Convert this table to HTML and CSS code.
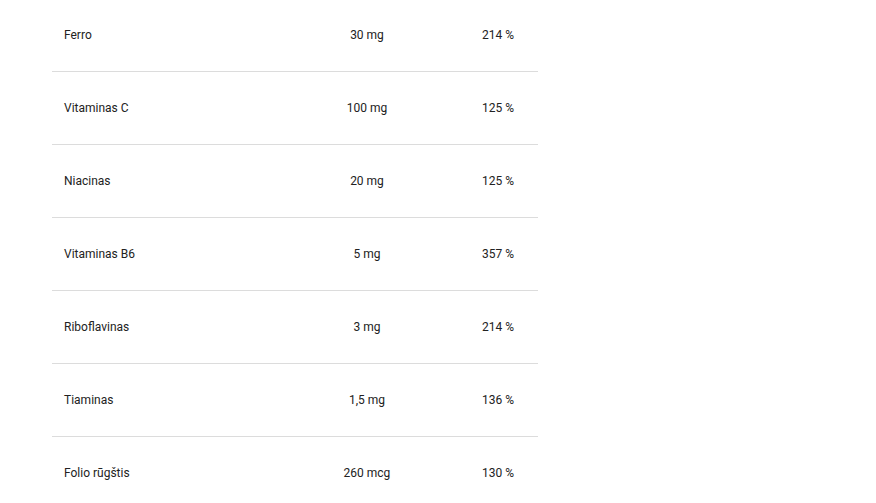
FILE: index.html
```html
<!DOCTYPE html>
<html lang="lt">
<head>
<meta charset="utf-8">
<link rel="stylesheet" href="styles.css">
</head>
<body>
<div class="table">
  <div class="row"><div class="name">Ferro</div><div class="amount">30 mg</div><div class="pct">214 %</div></div>
  <div class="row"><div class="name">Vitaminas C</div><div class="amount">100 mg</div><div class="pct">125 %</div></div>
  <div class="row"><div class="name">Niacinas</div><div class="amount">20 mg</div><div class="pct">125 %</div></div>
  <div class="row"><div class="name">Vitaminas B6</div><div class="amount">5 mg</div><div class="pct">357 %</div></div>
  <div class="row"><div class="name">Riboflavinas</div><div class="amount">3 mg</div><div class="pct">214 %</div></div>
  <div class="row"><div class="name">Tiaminas</div><div class="amount">1,5 mg</div><div class="pct">136 %</div></div>
  <div class="row"><div class="name">Folio rūgštis</div><div class="amount">260 mcg</div><div class="pct">130 %</div></div>
</div>
</body>
</html>
```
FILE: styles.css
```css
html, body {
  margin: 0;
  padding: 0;
  background: #fff;
  overflow: hidden;
}
body {
  font-family: Roboto, "Liberation Sans", sans-serif;
  font-size: 12px;
  color: #222;
}
.table {
  width: 486px;
  margin: -1px 0 0 52px;
}
.row {
  display: grid;
  grid-template-columns: 224px 182px 80px;
  align-items: center;
  height: 72px;
  border-bottom: 1px solid #dcdcdc;
}
.name {
  padding-left: 12px;
}
.amount, .pct {
  text-align: center;
}
```
